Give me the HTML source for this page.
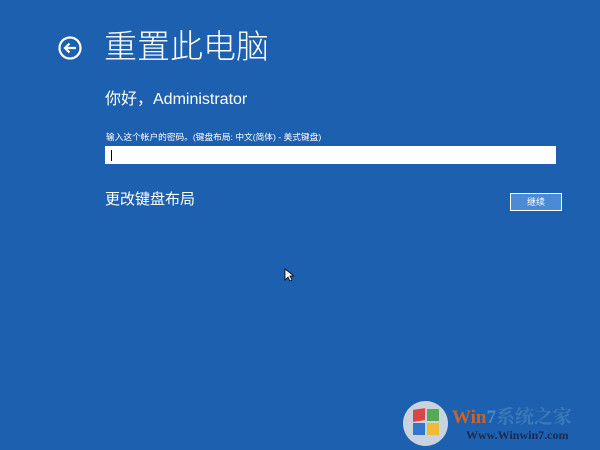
<!DOCTYPE html>
<html><head><meta charset="utf-8"><style>
body{margin:0;width:600px;height:450px;background:#1e60b0;position:relative;overflow:hidden;font-family:"Liberation Sans","Noto Sans CJK SC",sans-serif;color:#fff}
.a{position:absolute;white-space:nowrap}
</style></head><body>
<svg class="a" style="left:57px;top:35px" width="26" height="26" viewBox="0 0 26 26"><circle cx="13" cy="13" r="10.5" fill="none" stroke="#fff" stroke-width="2.2"/><path d="M19 13H8M12.5 8.5L8 13l4.5 4.5" fill="none" stroke="#fff" stroke-width="2.2"/></svg>
<div class="a" style="left:104px;top:27px;font-size:33px;font-weight:300;line-height:40px">重置此电脑</div>
<div class="a" style="left:105px;top:89px;font-size:16px;line-height:22px">你好，Administrator</div>
<div class="a" style="left:106px;top:131px;font-size:8.7px;line-height:12px">输入这个帐户的密码。(键盘布局: 中文(简体) - 美式键盘)</div>
<div class="a" style="left:105px;top:146px;width:451px;height:18px;background:#fff"></div>
<div class="a" style="left:111px;top:150px;width:1px;height:11px;background:#000"></div>
<div class="a" style="left:105px;top:189px;font-size:15px;line-height:22px">更改键盘布局</div>
<div class="a" style="left:510px;top:193px;width:50px;height:16px;border:1px solid #fff;background:#4a8ad6;font-size:9px;line-height:16px;text-align:center">继续</div>
<svg class="a" style="left:284px;top:268px" width="10" height="14"><path d="M1 1v11l3-3 2 4 2-1-2-4h4z" fill="#fff" stroke="#000" stroke-width="0.8"/></svg>
<div class="a" style="left:403px;top:401px;width:45px;height:45px;border-radius:50%;background:#c9d3e0"></div>
<div class="a" style="left:413px;top:409px;width:12px;height:12px;background:#d44;transform:skewY(-8deg)"></div>
<div class="a" style="left:427px;top:409px;width:12px;height:12px;background:#5a5"></div>
<div class="a" style="left:413px;top:423px;width:12px;height:12px;background:#37c"></div>
<div class="a" style="left:427px;top:423px;width:12px;height:12px;background:#eb3"></div>
<div class="a" style="left:452px;top:402px;font-size:19px;font-weight:bold;font-family:'Liberation Serif','Noto Serif CJK SC',serif;color:#c8642a">Win<span style="color:#4a8ac8">7</span><span style="color:#3a7ab8">系统之家</span></div>
<div class="a" style="left:466px;top:428px;font-size:12px;font-weight:bold;font-family:'Liberation Serif',serif;color:#1a2a50">Www.Winwin7.com</div>
</body></html>
